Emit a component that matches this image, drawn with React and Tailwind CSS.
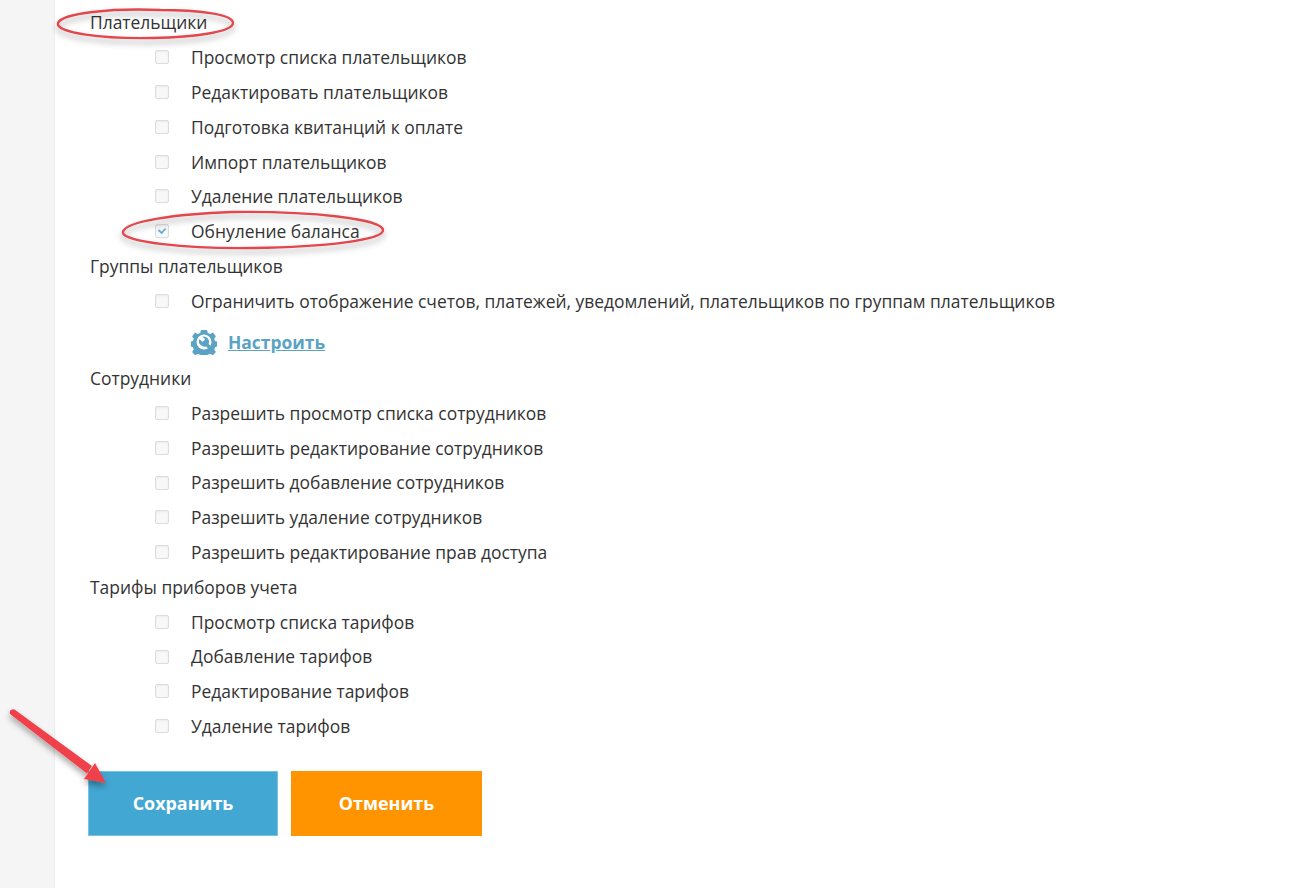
import React from 'react';

const groups = [
  {
    title: 'Плательщики',
    items: [
      { label: 'Просмотр списка плательщиков' },
      { label: 'Редактировать плательщиков' },
      { label: 'Подготовка квитанций к оплате' },
      { label: 'Импорт плательщиков' },
      { label: 'Удаление плательщиков' },
      { label: 'Обнуление баланса', checked: true },
    ],
  },
  {
    title: 'Группы плательщиков',
    items: [{ label: 'Ограничить отображение счетов, платежей, уведомлений, плательщиков по группам плательщиков' }],
    configure: true,
  },
  {
    title: 'Сотрудники',
    items: [
      { label: 'Разрешить просмотр списка сотрудников' },
      { label: 'Разрешить редактирование сотрудников' },
      { label: 'Разрешить добавление сотрудников' },
      { label: 'Разрешить удаление сотрудников' },
      { label: 'Разрешить редактирование прав доступа' },
    ],
  },
  {
    title: 'Тарифы приборов учета',
    items: [
      { label: 'Просмотр списка тарифов' },
      { label: 'Добавление тарифов' },
      { label: 'Редактирование тарифов' },
      { label: 'Удаление тарифов' },
    ],
  },
];

const GearWrench = () => (
  <svg width="26" height="26" viewBox="0 0 26 26" className="shrink-0">
    <path
      fill="#5ba3c4"
      d="M10 1h6l.8 3 2.400 1 2.700-1.600 3 3.800-1.600 2.500.7 2.300 2 .6v5l-2 .7-.7 2.200 1.600 2.600-3 3.200-2.700-1.600-2.400 1-.8 1.300h-6l-.8-1.300-2.400-1-2.700 1.600-3-3.200 1.600-2.600-.7-2.200-2-.7v-5l2-.6.7-2.300L1.100 7.200l3-3.800 2.700 1.600 2.400-1z"
    />
    <circle cx="13" cy="13" r="7.500" fill="#fff" />
    <path d="M8.200 10.200a5.600 5.600 0 0 0 6.800 7.200l3.500 3.300 2.500-2.500-3.300-3.300a5.600 5.600 0 0 0-6.300-7.400l2.800 2.800-2.500 2.500z" fill="#5ba3c4" />
  </svg>
);

const Row = ({ label, checked }) => (
  <div className="flex h-[34.8px] items-center pl-[65px]">
    <span className="flex h-[14px] w-[14px] items-center justify-center rounded-[2px] border border-[#dcdcdc] bg-[#f8f8f8] shadow-[inset_0_1px_2px_rgba(0,0,0,0.05)]">
      {checked && (
        <svg width="10" height="10" viewBox="0 0 10 10">
          <path d="M1.500 4l3.200 3L8.500 2.500" fill="none" stroke="#63acd2" strokeWidth="1.800" />
        </svg>
      )}
    </span>
    <span className="ml-[22px] whitespace-nowrap">{label}</span>
  </div>
);

const Annotations = () => (
  <svg width="1299" height="888" viewBox="0 0 1299 888" className="pointer-events-none absolute left-0 top-0">
    <defs>
      <filter id="shadow" x="-20%" y="-60%" width="140%" height="240%">
        <feDropShadow dx="0" dy="4" stdDeviation="3" floodColor="#000" floodOpacity="0.35" />
      </filter>
    </defs>
    <g filter="url(#shadow)" fill="none" stroke="#e2474d" strokeWidth="2.400" strokeLinecap="round">
      <path d="M160 10C112 8 62 13 58 23c-3 10 45 16 95 15 42-1 80-6 80-15 0-9-36-13-73-13" />
      <path d="M232 212c-55 2-107 9-109 20-2 10 65 17 130 16 72-1 131-8 130-18-1-11-70-19-151-18" />
    </g>
    <g filter="url(#shadow)" fill="#f0414a">
      <path d="M10 714a3.500 3.500 0 0 1 4.500-4.500L92 766l-5 7.500z" />
      <path d="M106 783L84 779 95 763z" />
    </g>
  </svg>
);

export default function App() {
  return (
    <div className="relative h-[888px] w-[1299px] overflow-hidden bg-white font-['Open_Sans',sans-serif] text-[17.43px] text-[#333]">
      <div className="flex h-full">
        <div className="w-[55px] shrink-0 border-r border-[#ececec] bg-[#f5f5f5]" />
        <div className="flex-1 pl-[35px] pt-[5px]">
          {groups.map((group) => (
            <div key={group.title}>
              <div className="flex h-[34.8px] items-center">{group.title}</div>
              {group.items.map((item) => (
                <Row key={item.label} {...item} />
              ))}
              {group.configure && (
                <div className="flex h-[42.6px] items-center gap-[11px] pl-[101px] pt-[6px]">
                  <GearWrench />
                  <a href="#" className="font-bold text-[#5ba3c4] underline">Настроить</a>
                </div>
              )}
            </div>
          ))}
          <div className="-ml-[2px] mt-[27.4px] flex gap-[13px] text-[17.9px]">
            <button className="h-[65px] w-[190px] border border-[#7cc3e0] bg-[#43a7d3] font-bold text-white">Сохранить</button>
            <button className="h-[65px] w-[191px] bg-[#ff9400] font-bold text-white">Отменить</button>
          </div>
        </div>
      </div>
      <Annotations />
    </div>
  );
}
